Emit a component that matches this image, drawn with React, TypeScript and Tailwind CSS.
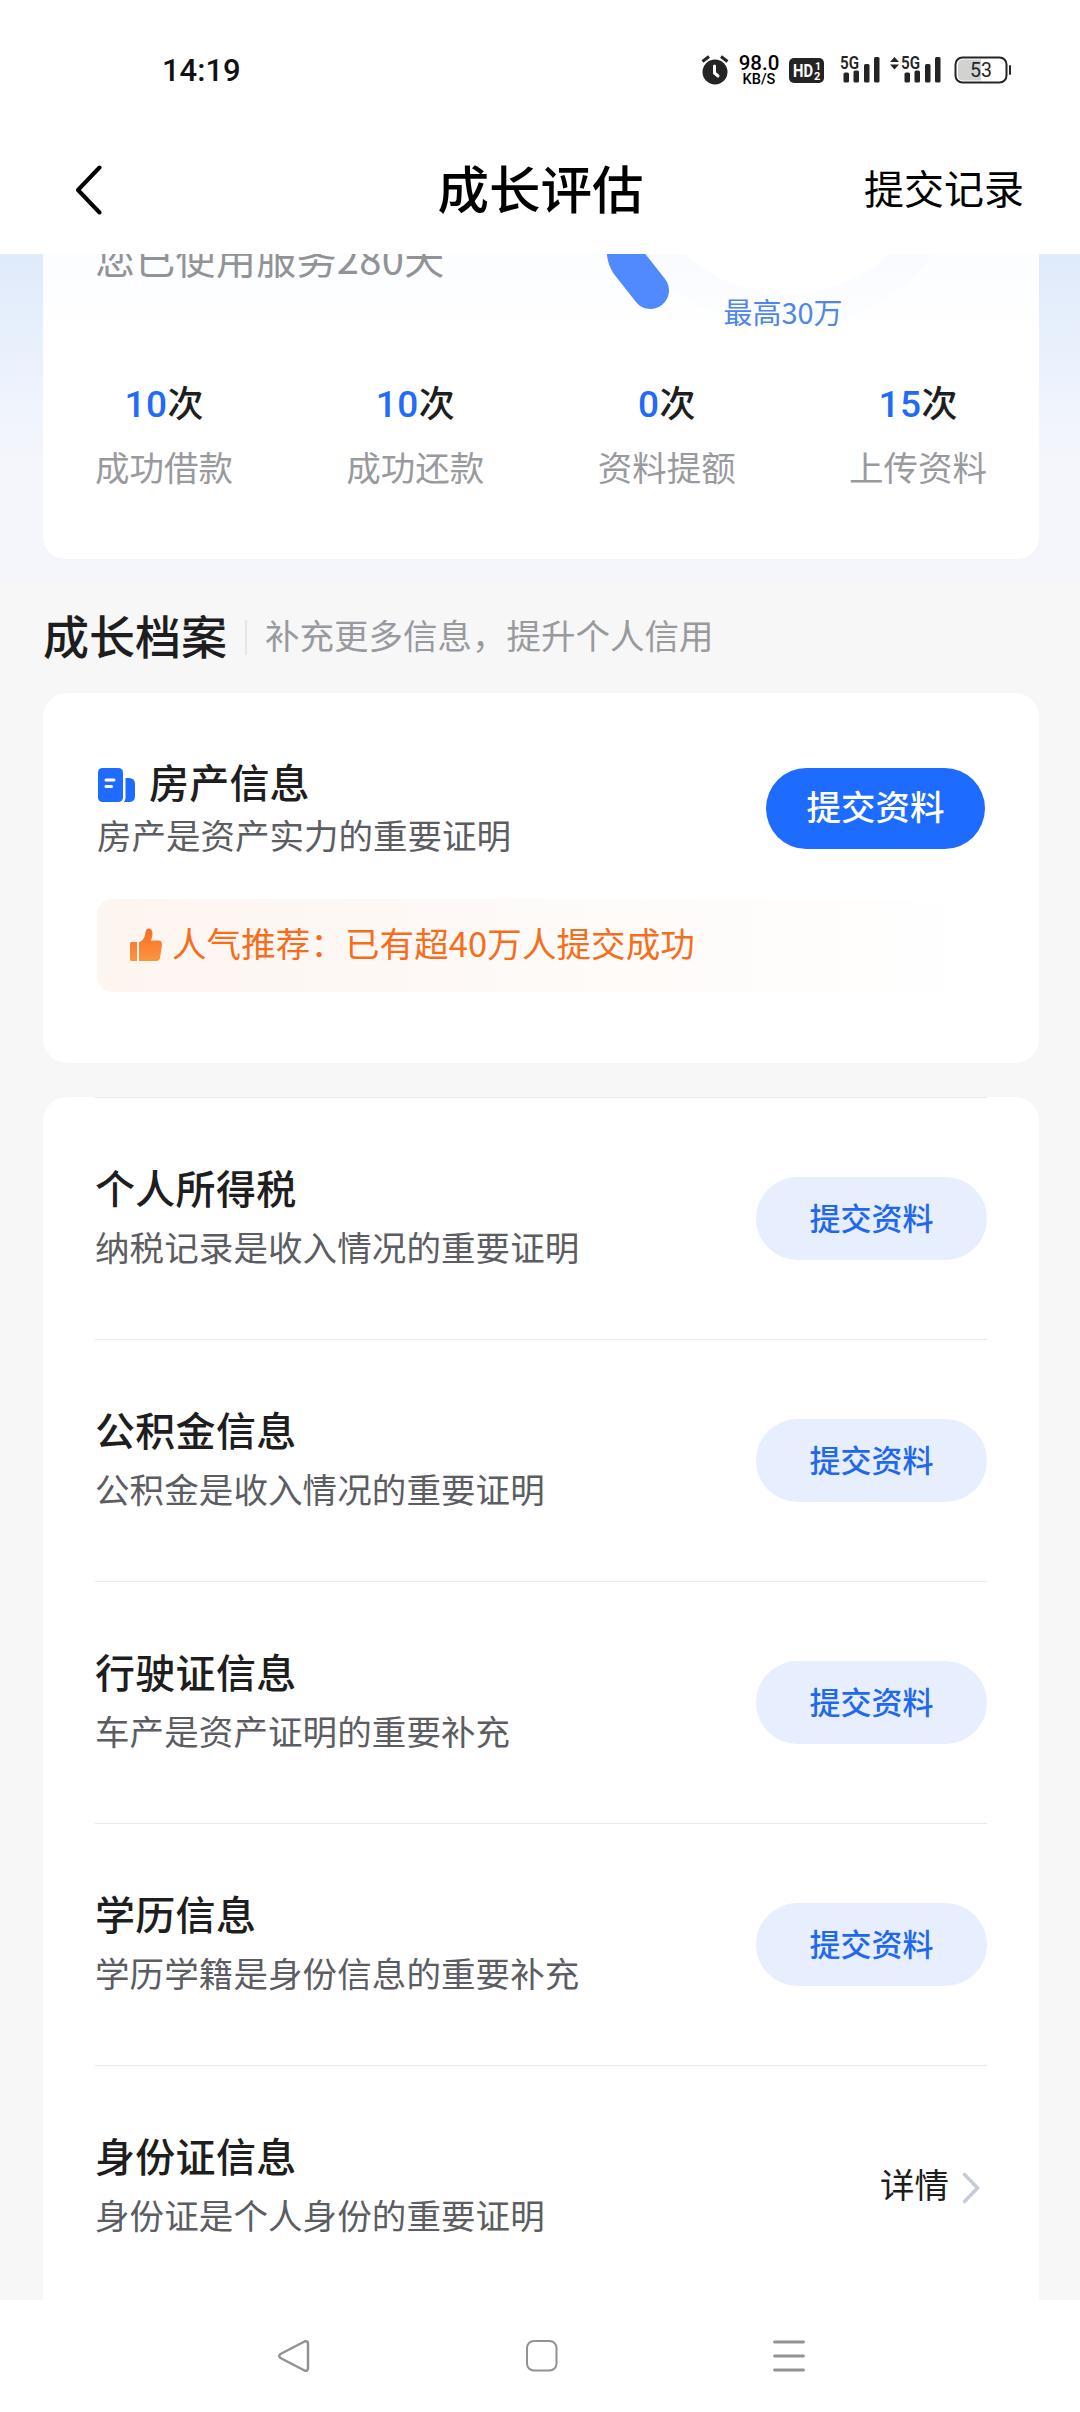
import React from 'react';

const STATS = [
  { count: '10', label: '成功借款' },
  { count: '10', label: '成功还款' },
  { count: '0', label: '资料提额' },
  { count: '15', label: '上传资料' },
];

const RECORDS = [
  { title: '个人所得税', desc: '纳税记录是收入情况的重要证明', done: false },
  { title: '公积金信息', desc: '公积金是收入情况的重要证明', done: false },
  { title: '行驶证信息', desc: '车产是资产证明的重要补充', done: false },
  { title: '学历信息', desc: '学历学籍是身份信息的重要补充', done: false },
  { title: '身份证信息', desc: '身份证是个人身份的重要证明', done: true },
];

const SignalBars: React.FC<{ arrows?: boolean }> = ({ arrows }) => (
  <svg width="52" height="38" viewBox="0 -4 52 38" fill="#242424">
    {arrows && (
      <>
        <path d="M1 7 L5.5 2 L10 7 Z" />
        <path d="M1 9.5 L5.5 14.5 L10 9.5 Z" />
      </>
    )}
    <text x="12" y="13.5" fontSize="18" fontWeight="600" textLength="19" lengthAdjust="spacingAndGlyphs" fontFamily="Roboto, sans-serif">5G</text>
    <rect x="15.5" y="17.5" width="5.5" height="10" rx="1.5" />
    <rect x="25.5" y="15.5" width="5.5" height="12" rx="1.5" />
    <rect x="36" y="9" width="5.5" height="18.5" rx="1.5" />
    <rect x="46" y="2" width="5.5" height="25.5" rx="1.5" />
  </svg>
);

const StatusBar: React.FC = () => (
  <div className="flex h-[140px] items-center pl-[162px] pr-[68px] font-['Roboto','Noto_Sans_CJK_SC',sans-serif]">
    <span className="text-[31px] leading-none font-medium text-[#111]">14:19</span>
    <div className="ml-auto flex items-center">
      <svg width="28" height="30" viewBox="0 0 28 30" fill="none" className="mr-[9px]">
        <circle cx="14" cy="17" r="12.5" fill="#242424" />
        <path d="M1.5 6.5 L8 1.5 M26.5 6.5 L20 1.5" stroke="#242424" strokeWidth="3" />
        <path d="M13.5 11 V18 L17 21" stroke="#fff" strokeWidth="3" strokeLinecap="round" strokeLinejoin="round" />
      </svg>
      <div className="mr-[9px] flex w-[42px] flex-col items-center text-black">
        <span className="text-[20.5px] leading-[18px] font-medium">98.0</span>
        <span className="text-[14.5px] leading-[15px] font-medium">KB/S</span>
      </div>
      <svg width="35" height="25" viewBox="0 0 35 25" className="mr-[4px]" fontFamily="Roboto, sans-serif">
        <rect width="35" height="25" rx="5" fill="#242424" />
        <text x="4" y="19" fontSize="18" fontWeight="700" fill="#fff" textLength="20" lengthAdjust="spacingAndGlyphs">HD</text>
        <text x="26" y="11.5" fontSize="10.5" fontWeight="700" fill="#fff">1</text>
        <text x="25" y="21.5" fontSize="11" fontWeight="700" fill="#fff">2</text>
      </svg>
      <SignalBars />
      <span className="w-[9px]" />
      <SignalBars arrows />
      <svg width="58" height="28" viewBox="0 0 58 28" className="ml-[13px]" fontFamily="Roboto, sans-serif">
        <path d="M9 3.5 H27 V24.5 H9 Q4 24.5 4 19.5 V8.5 Q4 3.5 9 3.5 Z" fill="#d2d2d2" />
        <rect x="1.5" y="1.5" width="51" height="25" rx="7" fill="none" stroke="#242424" strokeWidth="2" />
        <rect x="55" y="9" width="2" height="10" rx="1" fill="#242424" />
        <text x="27" y="21" fontSize="19.5" textAnchor="middle" fill="#242424">53</text>
      </svg>
    </div>
  </div>
);

const NavBar: React.FC = () => (
  <div className="grid h-[114px] grid-cols-[1fr_auto_1fr] items-center pr-[56px] pl-[57px] pb-[20px] text-black">
    <svg width="27" height="50" viewBox="0 0 27 50" fill="none" stroke="#000" strokeWidth="4" strokeLinecap="round" strokeLinejoin="round" className="mt-[5px] ml-[18px]">
      <path d="M24.500 2.500 L3 25 L24.500 47.500" />
    </svg>
    <h1 className="text-[51.5px] leading-none font-medium">成长评估</h1>
    <span className="justify-self-end text-[40px] leading-none">提交记录</span>
  </div>
);

const Gauge: React.FC = () => (
  <svg width="380" height="106" viewBox="0 0 380 106" fill="none">
    <defs>
      <linearGradient id="ring" x1="0" y1="0" x2="0" y2="1">
        <stop offset="0.6" stopColor="#f6f9ff" />
        <stop offset="1" stopColor="#fbfdff" />
      </linearGradient>
    </defs>
    <circle cx="187" cy="-108" r="165" stroke="url(#ring)" strokeWidth="34" />
    <circle cx="187" cy="-108" r="148" fill="#fff" />
    <path d="M25 -6 Q25 3 28.500 8.500 L50.500 36.500" stroke="#5189ff" strokeWidth="37" strokeLinecap="round" strokeLinejoin="round" />
    <text x="183" y="70" fontSize="29" textAnchor="middle" fill="#4f87e8">最高30万</text>
  </svg>
);

const SummaryCard: React.FC = () => (
  <section className="h-[305px] overflow-hidden rounded-b-[22px] bg-linear-to-b from-[#fcfdff] to-white to-30%">
    <div className="flex h-[106px] justify-between pl-[52px] pr-[59px]">
      <p className="-mt-[17px] text-[40px] leading-[40px] tracking-[0.3px] text-[#929397]">您已使用服务280天</p>
      <Gauge />
    </div>
    <div className="flex justify-between pt-[23px] pr-[52px] pl-[52px]">
      {STATS.map((s) => (
        <div key={s.label} className="flex flex-col items-center">
          <p className="text-[36px] leading-[36px] font-medium text-[#1e1e1e]">
            <span className="font-['Roboto',sans-serif] text-[37px] tracking-[0.5px] text-[#216bf8]">{s.count}</span>次
          </p>
          <p className="mt-[25px] text-[34.5px] leading-[36px] text-[#999a9e]">{s.label}</p>
        </div>
      ))}
    </div>
  </section>
);

const PropertyCard: React.FC = () => (
  <section className="h-[370px] rounded-[24px] bg-white px-[54px] pt-[66px]">
    <div className="flex items-start justify-between">
      <div>
        <div className="flex items-center">
          <svg width="38" height="36" viewBox="0 0 38 36" className="mt-[8px]">
            <rect x="1" y="1" width="25" height="34" rx="4.500" fill="#1f6bff" />
            <path d="M28.500 11 H32 Q38 11 38 17 V29 Q38 35 32 35 H27 Q28.500 33 28.500 31 Z" fill="#1f6bff" />
            <path d="M9 13 H17 M9 19.500 H14.500" stroke="#fff" strokeWidth="3" strokeLinecap="round" />
          </svg>
          <h3 className="ml-[14px] text-[40px] leading-[44px] font-medium tracking-[0.2px] text-[#1e1e1e]">房产信息</h3>
        </div>
        <p className="mt-[13px] text-[34.5px] leading-[36px] text-[#5c5d63]">房产是资产实力的重要证明</p>
      </div>
      <button className="mt-[9px] h-[81px] w-[219px] rounded-full bg-[#1e6bff] pb-[6px] text-[34.5px] leading-none font-medium text-white">提交资料</button>
    </div>
    <div className="mt-[47px] flex h-[93px] items-center rounded-[16px] bg-linear-to-r from-[#fdf5f0] to-white pl-[33px]">
      <svg width="32" height="34" viewBox="0 0 32 34" className="-mt-[2px]">
        <defs>
          <linearGradient id="thumb" x1="0" y1="0" x2="0" y2="1">
            <stop offset="0" stopColor="#fa6e22" />
            <stop offset="1" stopColor="#fb9540" />
          </linearGradient>
        </defs>
        <path fill="url(#thumb)" d="M1.500 14 H7 V33 H1.500 Q0 33 0 31.500 V15.500 Q0 14 1.500 14 Z M9 14 L11.500 13 Q15 10 15.500 4 Q16 0.500 19 0.500 Q22.500 1 22.500 6 Q22.500 9.500 21 12.500 H29 Q32.500 13 32 17 L30 30 Q29.500 33 26.500 33 H9 Z" />
      </svg>
      <span className="-mt-[7px] ml-[10px] text-[34.5px] leading-none tracking-[0.1px] text-[#f66d1c]">人气推荐：已有超40万人提交成功</span>
    </div>
  </section>
);

const RecordRow: React.FC<{ title: string; desc: string; done: boolean }> = ({ title, desc, done }) => (
  <div className="flex h-[242px] shrink-0 items-center justify-between border-t border-[#e9e9e9]">
    <div className="pb-[8px]">
      <h3 className="text-[40px] leading-[44px] font-medium tracking-[0.3px] text-[#1e1e1e]">{title}</h3>
      <p className="mt-[19px] text-[34.500px] leading-[36px] tracking-[0.1px] text-[#5c5d63]">{desc}</p>
    </div>
    {done ? (
      <div className="mt-[2px] flex items-center pr-[7px]">
        <span className="-mt-[8px] text-[34.5px] leading-none text-[#1e1e1e]">详情</span>
        <svg width="18" height="32" viewBox="0 0 18 32" fill="none" stroke="#c6cbda" strokeWidth="3.500" strokeLinecap="round" className="ml-[13px]">
          <path d="M2.500 2.500 L15.500 16 L2.500 29.500" />
        </svg>
      </div>
    ) : (
      <button className="h-[83px] w-[231px] rounded-full bg-[#e7eefe] pb-[4px] text-[31px] leading-none font-medium text-[#2168ee]">提交资料</button>
    )}
  </div>
);

const SystemNav: React.FC = () => (
  <div className="flex h-[112px] items-center justify-between bg-white pr-[275px] pl-[276px]">
    <svg width="35" height="34" viewBox="0 0 35 34" fill="none" stroke="#929292" strokeWidth="2.5" strokeLinejoin="round">
      <path d="M28.500 2.500 Q32 1.500 32 5 V29 Q32 32.500 28.500 31.500 L4.500 19 Q2 17 4.500 15 Z" />
    </svg>
    <svg width="32" height="32" viewBox="0 0 32 32" fill="none" stroke="#929292" strokeWidth="2">
      <rect x="1" y="1" width="29.500" height="29.500" rx="7" />
    </svg>
    <svg width="32" height="32" viewBox="0 0 32 32" stroke="#929292" strokeWidth="2.800" strokeLinecap="round">
      <path d="M1.500 2 H30.500 M1.500 16 H30.500 M1.500 30 H30.500" />
    </svg>
  </div>
);

export default function App() {
  return (
    <div className="flex h-[2412px] w-[1080px] flex-col overflow-hidden bg-white font-['Noto_Sans_CJK_SC',sans-serif]">
      <StatusBar />
      <NavBar />

      <main className="flex h-[2046px] flex-col overflow-hidden bg-[#f7f7f8]">
        <div className="h-[328px] shrink-0 bg-linear-to-b from-[#dfeafa] via-[#edf3fd] via-40% to-[#f5f6fb] to-65% px-[43px] pr-[41px]">
          <SummaryCard />
        </div>

        <div className="flex h-[111px] shrink-0 items-center pl-[43px]">
          <h2 className="-mt-[8px] text-[46px] leading-none font-medium text-[#1e1e1e]">成长档案</h2>
          <span className="ml-[18px] h-[35px] w-[2px] bg-[#e6e6e7]" />
          <span className="-mt-[6px] ml-[18px] text-[34.5px] leading-none text-[#999a9e]">补充更多信息，提升个人信用</span>
        </div>

        <div className="flex shrink-0 flex-col gap-[34px] pr-[41px] pl-[43px]">
          <PropertyCard />
          <section className="rounded-t-[24px] bg-white px-[52px]">
            {RECORDS.map((r) => (
              <RecordRow key={r.title} {...r} />
            ))}
          </section>
        </div>
      </main>

      <SystemNav />
    </div>
  );
}
